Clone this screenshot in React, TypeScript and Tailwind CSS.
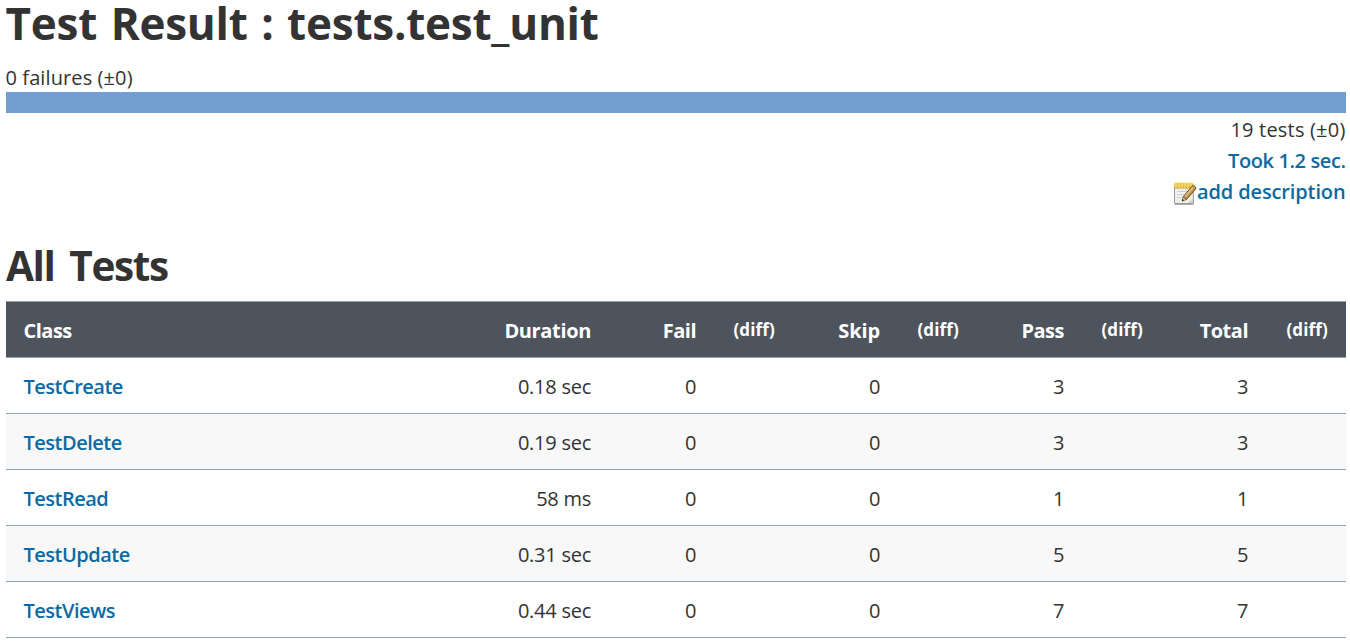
const rows = [
  { name: "TestCreate", duration: "0.18 sec", fail: 0, skip: 0, pass: 3, total: 3 },
  { name: "TestDelete", duration: "0.19 sec", fail: 0, skip: 0, pass: 3, total: 3 },
  { name: "TestRead", duration: "58 ms", fail: 0, skip: 0, pass: 1, total: 1 },
  { name: "TestUpdate", duration: "0.31 sec", fail: 0, skip: 0, pass: 5, total: 5 },
  { name: "TestViews", duration: "0.44 sec", fail: 0, skip: 0, pass: 7, total: 7 },
];

const grid =
  "grid grid-cols-[444px_159px_105px_79px_105px_79px_105px_79px_105px_1fr] h-14 items-center border-b border-[#95a3ae] pt-[2px]";
const num = "pr-[18px] text-right";
const count = "pr-[17.5px] text-right";

function NotepadIcon() {
  return (
    <svg width="24" height="24" viewBox="0 0 24 24" className="shrink-0">
      <path d="M2 23.200h18.500" stroke="#8d8d8b" strokeWidth="1" />
      <path d="M1.500 4.500h18.500l.5 18h-19z" fill="#f0efeb" stroke="#9a9a96" />
      <path d="M15 22l5-5v5z" fill="#d3d2cd" />
      <path d="M4.500 10.500h11M4.500 13.500h8M4.500 16.500h6" stroke="#cfcfcb" />
      <rect x="1" y="2" width="19.500" height="5" rx="1.500" fill="#e5bd3c" />
      <path d="M3 1.500v4.500M6 1.500v4.500M9 1.500v4.500M12 1.500v4.500M15 1.500v4.500M18 1.500v4.500" stroke="#f8df72" strokeWidth="1.500" strokeLinecap="round" />
      <path d="M2 7.200h18" stroke="#c8a655" strokeWidth=".8" />
      <path d="M10.200 15.800L19 5.200q1.200-1 2.500 0l.8.700q1 1 .200 2.300L13.500 18.500z" fill="#c1934b" stroke="#6d5023" strokeWidth="1" />
      <path d="M12 15.500L20.300 6.200" stroke="#e6c589" strokeWidth="1.500" />
      <path d="M9.200 20l1-4.200 3.300 2.700z" fill="#ecd5a4" stroke="#6d5023" strokeWidth=".8" />
      <path d="M9 20.200l.6-2.200 1.500 1.200z" fill="#222" />
    </svg>
  );
}

function Diff() {
  return <div className="pr-[18px] pb-[1px] text-right text-[17px] leading-6 tracking-[0.15px]">(diff)</div>;
}

export default function App() {
  return (
    <main className="h-[643px] bg-white pr-1 pl-1.5 font-['Open_Sans','Noto_Sans',sans-serif] text-[20px] text-[#333]">
      <h1 className="-ml-[0.5px] h-[62px] text-[44px] leading-[46px] font-bold tracking-[-0.23px] whitespace-nowrap [word-spacing:2.4px]">
        Test Result : tests.test_unit
      </h1>
      <div className="-ml-[0.5px] h-[30px] leading-[31px] tracking-[0.1px]">0 failures (±0)</div>
      <div className="h-[21px] bg-[#729fcf]" />
      <div className="flex flex-col items-end pt-[1px] pr-[0.5px] leading-[31px]">
        <div className="tracking-[0.2px]">19 tests (±0)</div>
        <a className="font-semibold tracking-[-0.4px] text-[#0b6aa2]">Took 1.2 sec.</a>
        <a className="flex items-center font-semibold tracking-[-0.13px] text-[#0b6aa2]">
          <span className="pt-[3px]"><NotepadIcon /></span>
          <span>add description</span>
        </a>
      </div>
      <h2 className="mt-[33px] h-[61px] text-[40.5px] leading-[52px] font-bold tracking-[-1.35px] [word-spacing:5.5px]">All Tests</h2>
      <section className="border-t border-[#95a3ae]">
        <div className={grid + " bg-[#4d545d] font-bold tracking-[-0.5px] text-white"}>
          <div className="pl-[17.5px]">Class</div>
          <div className={num + " tracking-[-0.35px]"}>Duration</div>
          <div className={num}>Fail</div>
          <Diff />
          <div className={num + " tracking-[-0.1px]"}>Skip</div>
          <Diff />
          <div className={num}>Pass</div>
          <Diff />
          <div className={num}>Total</div>
          <Diff />
        </div>
        {rows.map((r, i) => (
          <div key={r.name} className={grid + (i % 2 ? " bg-[#f8f8f8]" : " bg-white")}>
            <a className="pl-[17.5px] font-semibold tracking-[-0.5px] text-[#0b6aa2]">{r.name}</a>
            <div className={num + " tracking-[-0.25px]"}>{r.duration}</div>
            <div className={count}>{r.fail}</div>
            <div />
            <div className={count}>{r.skip}</div>
            <div />
            <div className={count}>{r.pass}</div>
            <div />
            <div className={count}>{r.total}</div>
            <div />
          </div>
        ))}
      </section>
    </main>
  );
}
